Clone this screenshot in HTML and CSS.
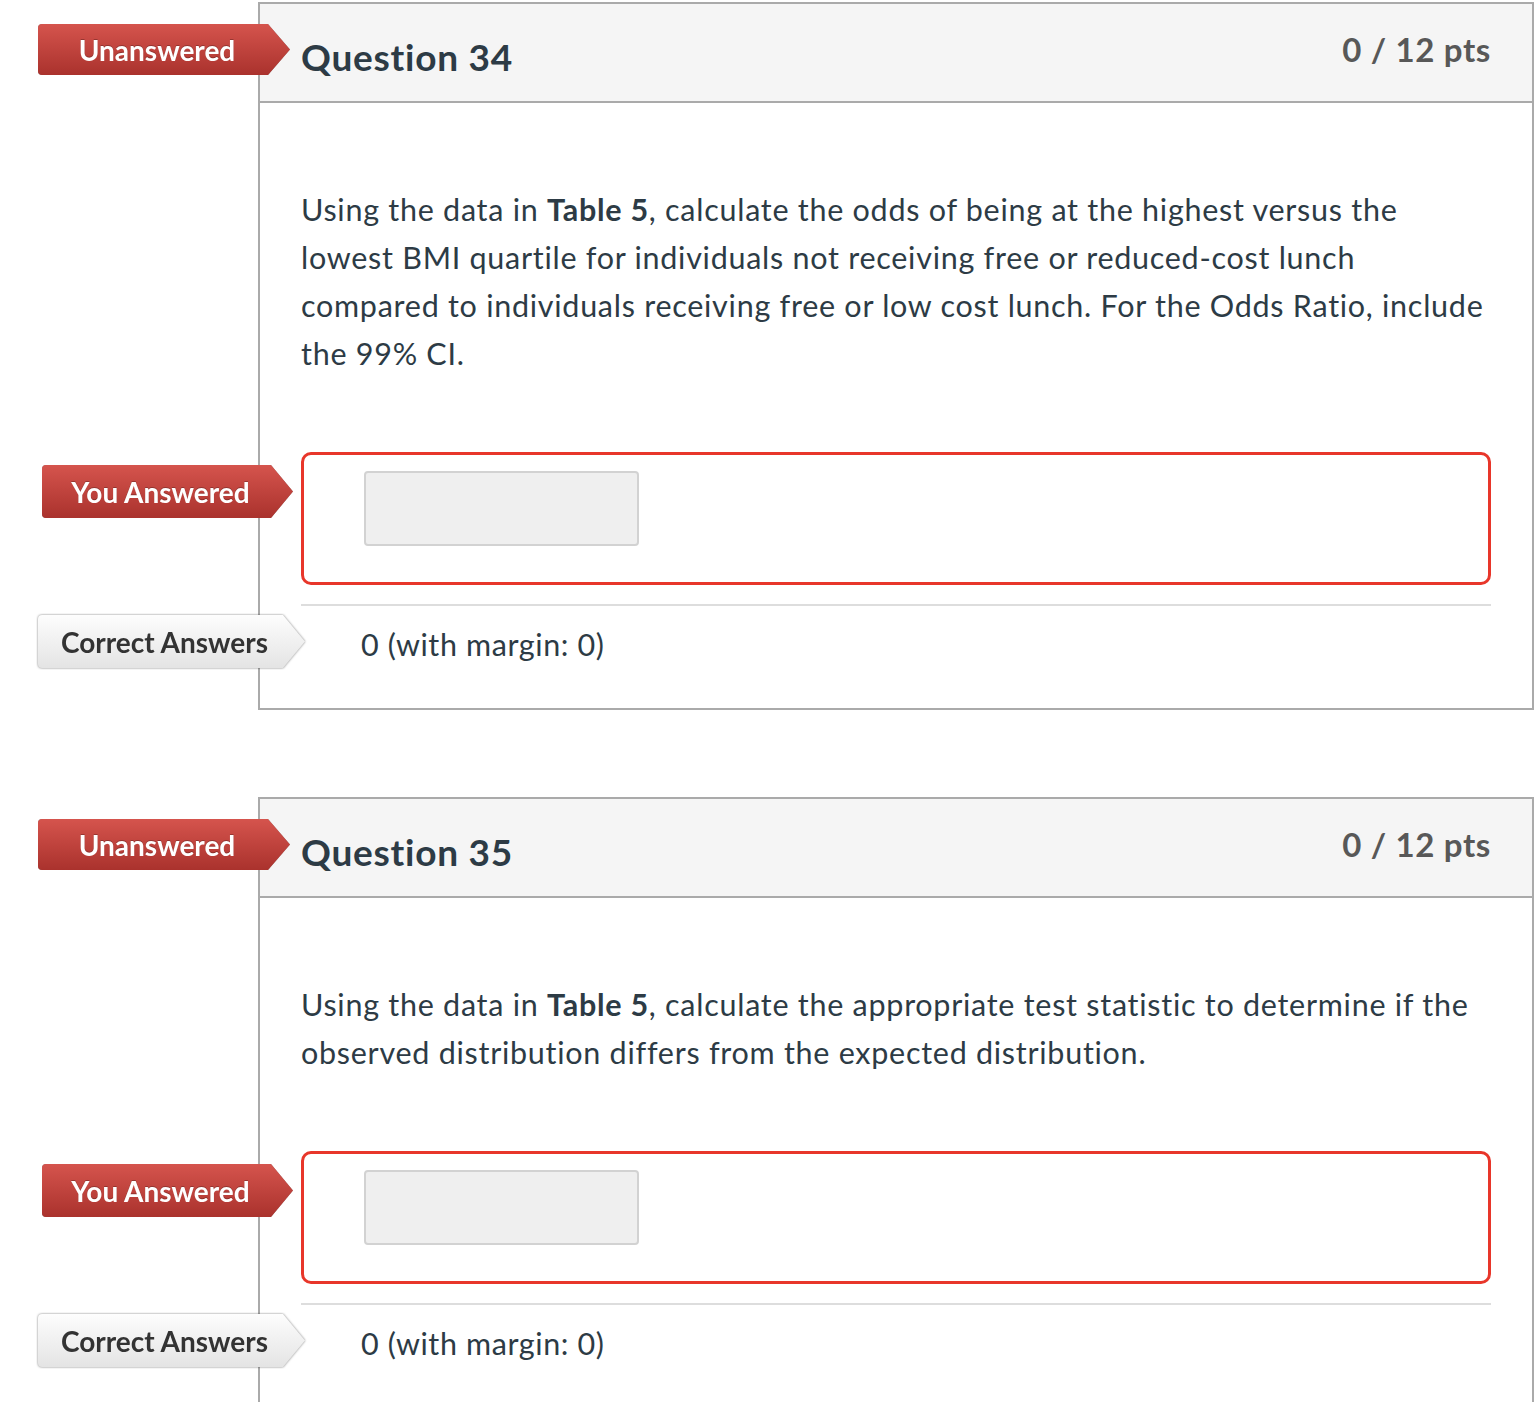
FILE: index.html
```html
<!DOCTYPE html>
<html lang="en">
<head>
<meta charset="utf-8">
<title>Quiz results</title>
<link rel="stylesheet" href="styles.css">
</head>
<body>
<div class="quiz">
  <div class="question">
    <div class="q-header">
      <div class="badge-wrap badge-unanswered"><div class="badge red">Unanswered</div></div>
      <h2 class="q-title">Question 34</h2>
      <div class="q-pts">0 / 12 pts</div>
    </div>
    <div class="q-body">
      <p class="q-text">Using the data in <b>Table 5</b>, calculate the odds of being at the highest versus the lowest BMI quartile for individuals not receiving free or reduced-cost lunch compared to individuals receiving free or low cost lunch. For the Odds Ratio, include the 99% CI.</p>
      <div class="answer-row">
        <div class="badge-wrap badge-you"><div class="badge red">You Answered</div></div>
        <div class="answer-box"><div class="answer-input"></div></div>
      </div>
      <div class="correct-row">
        <div class="badge-wrap badge-correct"><div class="badge gray">Correct Answers</div></div>
        <div class="correct-text">0 (with margin: 0)</div>
      </div>
    </div>
  </div>

  <div class="question">
    <div class="q-header">
      <div class="badge-wrap badge-unanswered"><div class="badge red">Unanswered</div></div>
      <h2 class="q-title">Question 35</h2>
      <div class="q-pts">0 / 12 pts</div>
    </div>
    <div class="q-body">
      <p class="q-text">Using the data in <b>Table 5</b>, calculate the appropriate test statistic to determine if the observed distribution differs from the expected distribution.</p>
      <div class="answer-row">
        <div class="badge-wrap badge-you"><div class="badge red">You Answered</div></div>
        <div class="answer-box"><div class="answer-input"></div></div>
      </div>
      <div class="correct-row">
        <div class="badge-wrap badge-correct"><div class="badge gray">Correct Answers</div></div>
        <div class="correct-text">0 (with margin: 0)</div>
      </div>
    </div>
  </div>
</div>
</body>
</html>
```

FILE: styles.css
```css
html, body {
  margin: 0;
  padding: 0;
  background: #fff;
}
html {
  overflow: hidden;
}
body {
  font-family: Lato, "Open Sans", "Liberation Sans", sans-serif;
  color: #2d3b45;
}
.quiz {
  padding-top: 2px;
}
.question {
  margin-left: 258px;
  border: 2px solid #aaaaaa;
  margin-bottom: 87px;
  background: #fff;
}
.q-header {
  position: relative;
  height: 97px;
  background: #f5f5f5;
  border-bottom: 2px solid #aaaaaa;
  display: flex;
  justify-content: space-between;
  align-items: flex-start;
  padding: 0 41px;
}
.q-title {
  margin: 0;
  padding-top: 33px;
  font-size: 37px;
  line-height: 40px;
  font-weight: 700;
  letter-spacing: 0.02em;
  color: #2d3b45;
}
.q-pts {
  padding-top: 25px;
  font-size: 33px;
  line-height: 40px;
  font-weight: 700;
  letter-spacing: 0.02em;
  color: #585858;
}
.q-body {
  padding: 82px 41px 0 41px;
}
.q-text {
  margin: 0;
  font-size: 30.5px;
  line-height: 48px;
  letter-spacing: 0.024em;
}
.q-text b {
  font-weight: 700;
}
.answer-row {
  position: relative;
  margin-top: 75px;
}
.answer-box {
  border: 3px solid #e8362a;
  border-radius: 10px;
  box-sizing: content-box;
  padding: 16px 0 0 60px;
  height: 111px;
}
.answer-input {
  width: 271px;
  height: 71px;
  background: #efefef;
  border: 2px solid #d2d2d2;
  border-radius: 4px;
}
.correct-row {
  position: relative;
  margin-top: 19px;
  border-top: 2px solid #dddddd;
  padding: 14px 0 40px 60px;
}
.correct-text {
  font-size: 30.5px;
  line-height: 48px;
  letter-spacing: 0.02em;
}

/* badges */
.badge-wrap {
  position: absolute;
  filter: drop-shadow(0 0 0.7px rgba(0,0,0,0.45));
}
.badge {
  display: flex;
  align-items: center;
  justify-content: center;
  box-sizing: border-box;
  border-radius: 4px 0 0 4px;
  clip-path: polygon(0 0, calc(100% - 22px) 0, 100% 50%, calc(100% - 22px) 100%, 0 100%);
  font-size: 28px;
  font-weight: 700;
  white-space: nowrap;
}
.badge.red {
  color: #fff;
  background: linear-gradient(#d5544d, #aa322d);
  text-shadow: 0 -1px 0 rgba(0,0,0,0.25);
}
.badge.gray {
  color: #333;
  background: linear-gradient(#fdfdfd, #e4e4e4);
}
.badge-unanswered {
  left: -222px;
  top: 20px;
}
.badge-unanswered .badge {
  width: 252px;
  height: 51px;
  padding-right: 14px;
}
.badge-you {
  left: -259px;
  top: 13px;
}
.badge-you .badge {
  width: 251px;
  height: 53px;
  padding-right: 14px;
}
.badge-correct {
  left: -263px;
  top: 9px;
  filter: drop-shadow(0 0 1px rgba(0,0,0,0.5));
}
.badge-correct .badge {
  width: 267px;
  height: 53px;
  padding-right: 14px;
}
```
